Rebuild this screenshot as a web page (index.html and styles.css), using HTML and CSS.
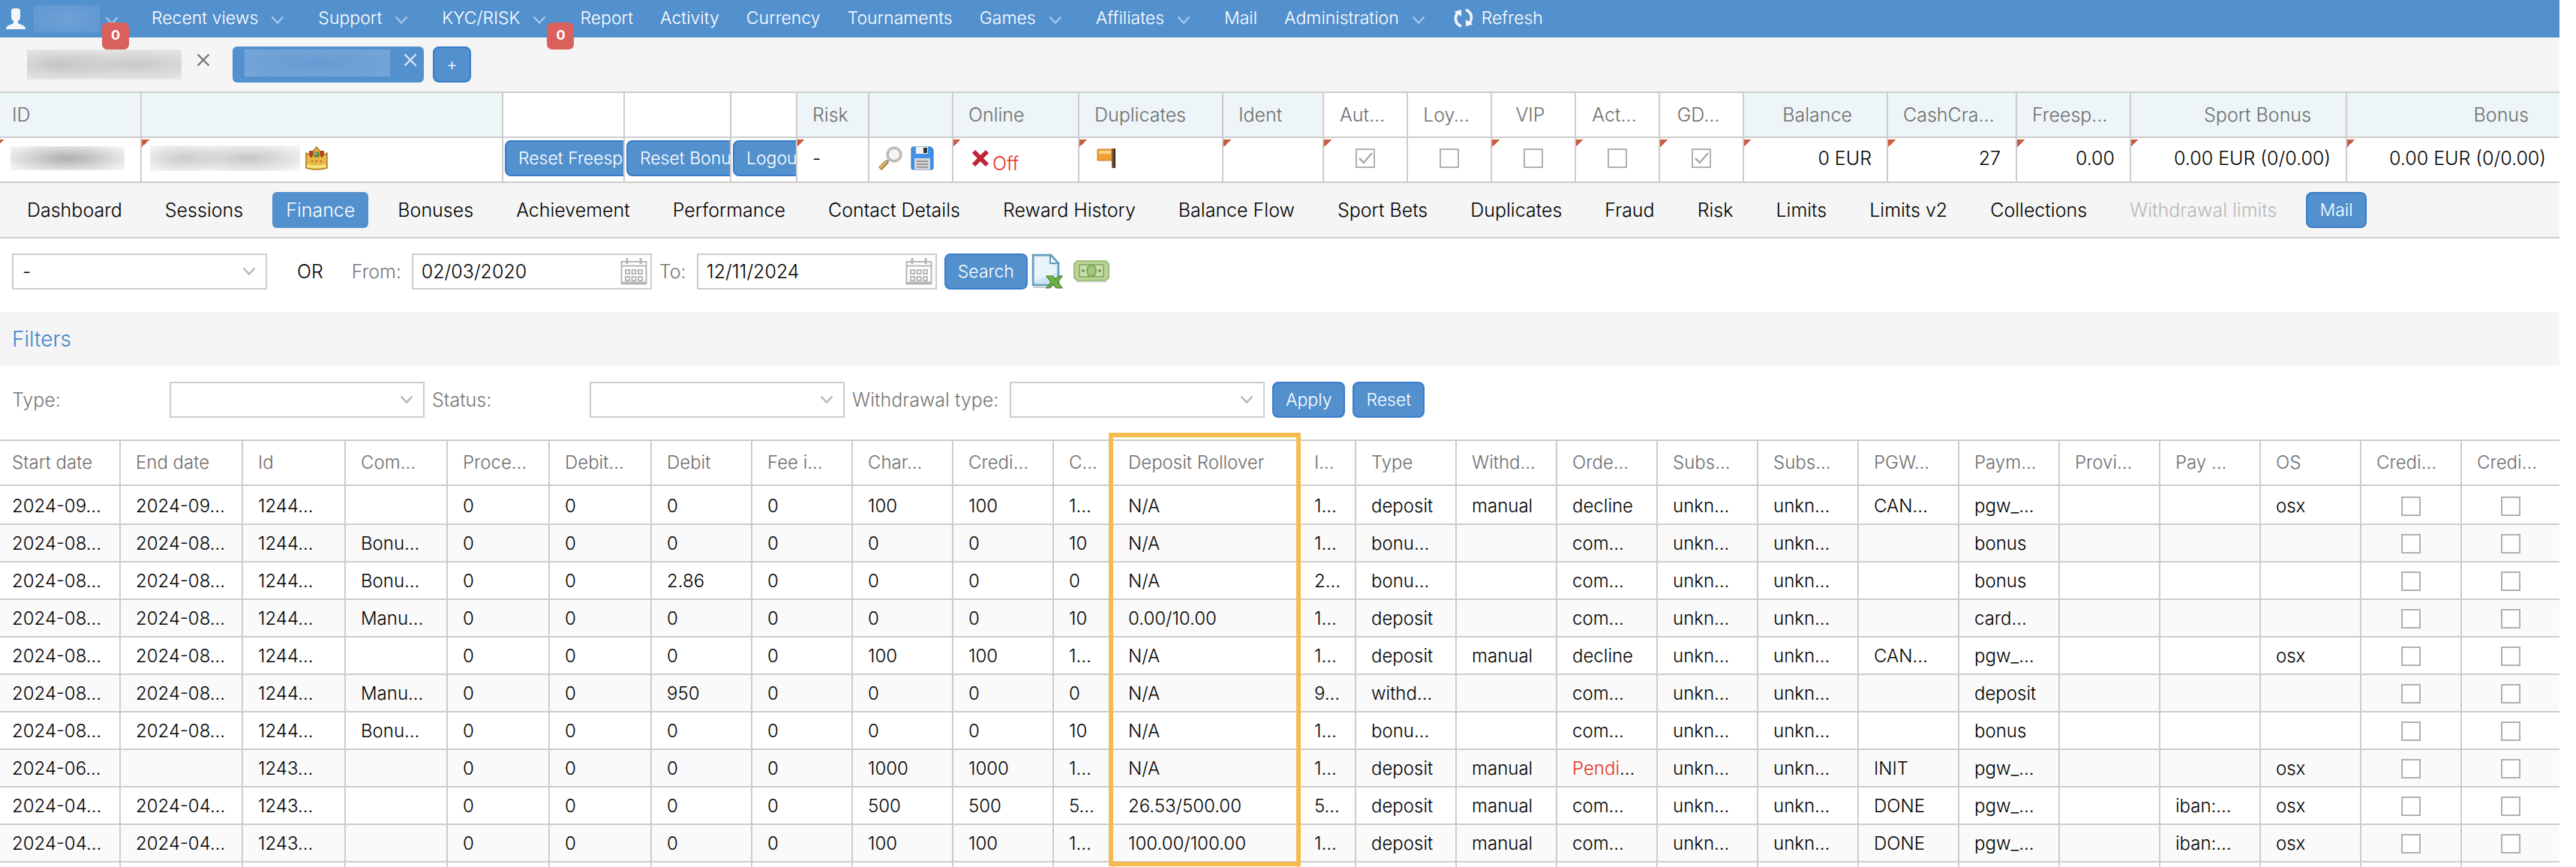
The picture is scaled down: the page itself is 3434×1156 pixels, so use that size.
FILE: index.html
```html
<!DOCTYPE html>
<html lang="en">
<head>
<meta charset="utf-8">
<title>Player finance</title>
<link rel="stylesheet" href="styles.css">
</head>
<body>
<svg class="sprite" aria-hidden="true">
  <symbol id="chev" viewBox="0 0 18 12"><path d="M1.500 1.500 9 9.500l7.500-8" fill="none" stroke="currentColor" stroke-width="2.500"/></symbol>
  <symbol id="close" viewBox="0 0 18 18"><path d="M1.500 1.500l15 15M16.500 1.500l-15 15" fill="none" stroke="currentColor" stroke-width="2.400"/></symbol>
  <symbol id="calendar" viewBox="0 0 36 38">
    <path d="M1.500 6h33v29h-33z" fill="#fff" stroke="#b5b5b5" stroke-width="2"/>
    <path d="M1 11.500h34" stroke="#b5b5b5" stroke-width="2"/><path d="M1 34.500h34" stroke="#b5b5b5" stroke-width="4"/>
    <path d="M9 1v8M27 1v8" stroke="#b5b5b5" stroke-width="3"/>
    <path d="M7 17h5v5H7zM15.500 17h5v5h-5zM24 17h5v5h-5zM7 26h5v5H7zM15.500 26h5v5h-5zM24 26h5v5h-5z" fill="none" stroke="#b5b5b5" stroke-width="2"/>
  </symbol>
</svg>

<nav class="topbar">
  <a class="top-item user" href="#" aria-label="Account">
    <svg width="26" height="28" viewBox="0 0 26 28"><path d="M7 3q0-3 6-3t6 3v8q0 4-3 6v3l7 3q3 1.500 3 5H0q0-3.500 3-5l7-3v-3q-3-2-3-6z" fill="#f4f6f8"/></svg>
    <span class="redact redact-user"></span>
    <svg class="chev" width="18" height="12"><use href="#chev"/></svg><b class="badge">0</b>
  </a>
  <a class="top-item menu" href="#">Recent views<svg class="chev" width="18" height="12"><use href="#chev"/></svg></a>
  <a class="top-item menu" href="#">Support<svg class="chev" width="18" height="12"><use href="#chev"/></svg></a>
  <a class="top-item menu" href="#">KYC/RISK<svg class="chev" width="18" height="12"><use href="#chev"/></svg><b class="badge">0</b></a>
  <a class="top-item" href="#">Report</a>
  <a class="top-item" href="#">Activity</a>
  <a class="top-item" href="#">Currency</a>
  <a class="top-item" href="#">Tournaments</a>
  <a class="top-item menu" href="#">Games<svg class="chev" width="18" height="12"><use href="#chev"/></svg></a>
  <a class="top-item menu" href="#">Affiliates<svg class="chev" width="18" height="12"><use href="#chev"/></svg></a>
  <a class="top-item" href="#">Mail</a>
  <a class="top-item menu" href="#">Administration<svg class="chev" width="18" height="12"><use href="#chev"/></svg></a>
  <a class="top-item refresh" href="#"><svg width="28" height="28" viewBox="0 0 28 28"><g fill="none" stroke="#f4f6f8" stroke-width="3.600"><path d="M11 25Q3 22 3.500 13.500 4 9 7 6"/><path d="M17 3q8 3 7.500 11.500-.5 4.500-3.500 7.500"/></g><path d="M1.500 5.500 11 3v9zM26.500 22.500 17 25v-9z" fill="#f4f6f8"/></svg>Refresh</a>
</nav>

<div class="tabs">
  <div class="tab"><span class="redact redact-tab"></span><button class="tab-close" aria-label="Close tab"><svg width="18" height="18"><use href="#close"/></svg></button></div>
  <div class="tab tab-on"><span class="redact redact-tab-on"></span><button class="tab-close" aria-label="Close tab"><svg width="18" height="18"><use href="#close"/></svg></button></div>
  <button class="btn tab-add">+</button>
</div>

<main class="page">
<table class="summary">
  <colgroup><col style="width:189px"><col style="width:482px"><col style="width:162px"><col style="width:142px"><col style="width:88px"><col style="width:96px"><col style="width:112px"><col style="width:168px"><col style="width:192px"><col style="width:134px"><col style="width:112px"><col style="width:112px"><col style="width:112px"><col style="width:112px"><col style="width:112px"><col style="width:192px"><col style="width:172px"><col style="width:152px"><col style="width:288px"><col style="width:283px"></colgroup>
  <thead><tr>
    <th class="tint">ID</th><th class="tint"></th><th></th><th></th><th></th><th class="tint">Risk</th><th class="tint"></th><th class="tint">Online</th><th class="tint">Duplicates</th><th class="tint">Ident</th><th class="mid">Aut…</th><th class="mid">Loy…</th><th class="mid">VIP</th><th class="mid">Act…</th><th class="mid">GD…</th><th class="tint num">Balance</th><th class="tint num wide">CashCra…</th><th class="tint num wide">Freesp…</th><th class="tint num">Sport Bonus</th><th class="tint num">Bonus</th>
  </tr></thead>
  <tbody><tr>
    <td class="note-left"><span class="redact redact-id"></span></td>
    <td class="note name"><div class="icons"><span class="redact redact-name"></span><svg width="32" height="32" viewBox="0 0 32 32"><path d="M2 9l5 3 4-5 5-6 5 6 4 5 5-3v20q-14 4-28 0z" fill="#e6bb45" stroke="#a87718" stroke-width="1.500"/><path d="M3 24q13 3 26 0v4q-13 3-26 0z" fill="#f7e27c"/><path d="M6 6h5l1 5-3 5-3-5zM26 6h-5l-1 5 3 5 3-5z" fill="#bb3a22"/><circle cx="16" cy="11" r="4" fill="#3f8a4e" stroke="#c9962a" stroke-width="1.500"/><circle cx="15" cy="10" r="1.500" fill="#a9d8a0"/><g fill="#c2602a"><circle cx="10" cy="20" r="1.300"/><circle cx="16" cy="20" r="1.300"/><circle cx="22" cy="20" r="1.300"/></g></svg></div></td>
    <td class="act"><button class="btn">Reset Freespins</button></td>
    <td class="act"><button class="btn">Reset Bonus</button></td>
    <td class="act"><button class="btn">Logout</button></td>
    <td class="note">-</td>
    <td class="tools"><div class="icons"><svg width="32" height="32" viewBox="0 0 32 32"><path d="M2 30 12 20" stroke="#a98245" stroke-width="6"/><path d="M2 29 11 20" stroke="#dcb267" stroke-width="3"/><path d="M11 21l4-4" stroke="#999" stroke-width="3"/><circle cx="21" cy="11" r="9" fill="#f4f4f4" stroke="#aaa" stroke-width="3.500"/><circle cx="21" cy="11" r="9.500" fill="none" stroke="#d6d6d6" stroke-width="1.200"/></svg><svg width="32" height="32" viewBox="0 0 32 32"><path d="M2 3q0-2 2-2h24l3 3v25q0 2-2 2H4q-2 0-2-2z" fill="#4192e6" stroke="#2b70c0"/><path d="M8 1h16v9H8z" fill="#f2f2f2"/><path d="M18 2h5v7h-5z" fill="#333"/><path d="M6 16h21v15H6z" fill="#d5d5d5"/><path d="M9 20h15M9 24h15M9 28h15" stroke="#9a9a9a" stroke-width="1.800"/></svg></div></td>
    <td class="note"><div class="icons off"><svg width="24" height="24" viewBox="0 0 24 24"><path d="M3 3l18 18M21 3 3 21" stroke="#bf2438" stroke-width="6"/></svg><span>Off</span></div></td>
    <td class="note"><svg class="flag" width="26" height="28" viewBox="0 0 26 28"><path d="M1 2h20v15H1z" fill="#f0a038" stroke="#c97a1e"/><path d="M3 4h16v4H3z" fill="#fbd48c"/><path d="M20 1h5v26h-5z" fill="#7a5232"/><path d="M23 1h2v26h-2z" fill="#3c2716"/></svg></td>
    <td class="note"></td>
    <td class="note mid"><input type="checkbox" aria-label="Auto" checked></td>
    <td class="mid"><input type="checkbox" aria-label="Loyalty"></td>
    <td class="note mid"><input type="checkbox" aria-label="VIP"></td>
    <td class="note mid"><input type="checkbox" aria-label="Active"></td>
    <td class="note mid"><input type="checkbox" aria-label="GDPR" checked></td>
    <td class="note num">0 EUR</td><td class="note num">27</td><td class="note num">0.00</td><td class="note num">0.00 EUR (0/0.00)</td><td class="note num">0.00 EUR (0/0.00)</td>
  </tr></tbody>
</table>

<nav class="sections">
  <a href="#">Dashboard</a><a href="#">Sessions</a><a class="on" href="#">Finance</a><a href="#">Bonuses</a><a href="#">Achievement</a><a href="#">Performance</a><a href="#">Contact Details</a><a href="#">Reward History</a><a href="#">Balance Flow</a><a href="#">Sport Bets</a><a href="#">Duplicates</a><a href="#">Fraud</a><a href="#">Risk</a><a href="#">Limits</a><a href="#">Limits v2</a><a href="#">Collections</a><a class="dim" href="#">Withdrawal limits</a><button class="btn">Mail</button>
</nav>

<form class="search">
  <select aria-label="Period"><option>-</option></select>
  <span class="or">OR</span>
  <label for="from">From:</label>
  <div class="date"><input id="from" type="text" value="02/03/2020"><svg width="36" height="38"><use href="#calendar"/></svg></div>
  <label for="to">To:</label>
  <div class="date"><input id="to" type="text" value="12/11/2024"><svg width="36" height="38"><use href="#calendar"/></svg></div>
  <button class="btn" type="button">Search</button>
  <button class="tool" type="button" aria-label="Export to spreadsheet"><svg width="46" height="48" viewBox="0 0 46 48"><path d="M4 2h24l10 11v29H4z" fill="#cfe4f1" stroke="#5f9dc0" stroke-width="2.500"/><path d="M7 5h20v9l8 2v10L7 36z" fill="#eaf5fb"/><path d="M27 2v11h11z" fill="#f8fcff" stroke="#5f9dc0" stroke-width="2"/><path d="M4 45h26" stroke="#b9b9b9" stroke-width="1.500"/><path d="M22 30h8l4 4 5-4h4l-6 8 6 8h-8l-4-5-5 5h-4l6-8z" fill="#6fb33f" stroke="#3f7f25" stroke-width="1.200"/></svg></button>
  <button class="tool money" type="button" aria-label="Payments"><svg width="48" height="32" viewBox="0 0 48 32"><path d="M5 2h38l4 4v18l-4 4H5l-4-4V6z" fill="#b9d595" stroke="#9dbd7b" stroke-width="2"/><path d="M8 7h32v16H8z" fill="#c9dfac" stroke="#8fb26d" stroke-width="2"/><ellipse cx="24" cy="15" rx="6" ry="7.500" fill="#a3c67d" stroke="#7fa55c" stroke-width="2"/><circle cx="13" cy="15" r="2" fill="#6f974c"/><circle cx="35" cy="15" r="2" fill="#6f974c"/><path d="M4 30h40" stroke="#d5d5d5" stroke-width="1.500"/></svg></button>
</form>

<h2 class="filters-title">Filters</h2>
<form class="filters">
  <label for="type">Type:</label><select id="type"><option></option></select>
  <label for="status">Status:</label><select id="status"><option></option></select>
  <label for="wtype">Withdrawal type:</label><select id="wtype"><option></option></select>
  <button class="btn" type="button">Apply</button><button class="btn" type="button">Reset</button>
</form>

<section class="grid-area">
<div class="grid-scroll">
<table class="grid">
  <colgroup><col style="width:161px"><col style="width:163px"><col style="width:137px"><col style="width:136px"><col style="width:136px"><col style="width:136px"><col style="width:134px"><col style="width:134px"><col style="width:134px"><col style="width:134px"><col style="width:79px"><col style="width:248px"><col style="width:76px"><col style="width:134px"><col style="width:134px"><col style="width:134px"><col style="width:134px"><col style="width:134px"><col style="width:134px"><col style="width:134px"><col style="width:134px"><col style="width:134px"><col style="width:134px"><col style="width:134px"><col style="width:130px"></colgroup>
  <thead><tr><th>Start date</th><th>End date</th><th>Id</th><th>Com…</th><th>Proce…</th><th>Debit…</th><th>Debit</th><th>Fee i…</th><th>Char…</th><th>Credi…</th><th>C…</th><th>Deposit Rollover</th><th>I…</th><th>Type</th><th>Withd…</th><th>Orde…</th><th>Subs…</th><th>Subs…</th><th>PGW…</th><th>Paym…</th><th>Provi…</th><th>Pay …</th><th>OS</th><th>Credi…</th><th>Credi…</th></tr></thead>
  <tbody>
  <tr><td>2024-09…</td><td>2024-09…</td><td>1244…</td><td></td><td>0</td><td>0</td><td>0</td><td>0</td><td>100</td><td>100</td><td>1…</td><td>N/A</td><td>1…</td><td>deposit</td><td>manual</td><td>decline</td><td>unkn…</td><td>unkn…</td><td>CAN…</td><td>pgw_…</td><td></td><td></td><td>osx</td><td><input type="checkbox" aria-label="Credit flag 1"></td><td><input type="checkbox" aria-label="Credit flag 2"></td></tr>
  <tr><td>2024-08…</td><td>2024-08…</td><td>1244…</td><td>Bonu…</td><td>0</td><td>0</td><td>0</td><td>0</td><td>0</td><td>0</td><td>10</td><td>N/A</td><td>1…</td><td>bonu…</td><td></td><td>com…</td><td>unkn…</td><td>unkn…</td><td></td><td>bonus</td><td></td><td></td><td></td><td><input type="checkbox" aria-label="Credit flag 1"></td><td><input type="checkbox" aria-label="Credit flag 2"></td></tr>
  <tr><td>2024-08…</td><td>2024-08…</td><td>1244…</td><td>Bonu…</td><td>0</td><td>0</td><td>2.86</td><td>0</td><td>0</td><td>0</td><td>0</td><td>N/A</td><td>2…</td><td>bonu…</td><td></td><td>com…</td><td>unkn…</td><td>unkn…</td><td></td><td>bonus</td><td></td><td></td><td></td><td><input type="checkbox" aria-label="Credit flag 1"></td><td><input type="checkbox" aria-label="Credit flag 2"></td></tr>
  <tr><td>2024-08…</td><td>2024-08…</td><td>1244…</td><td>Manu…</td><td>0</td><td>0</td><td>0</td><td>0</td><td>0</td><td>0</td><td>10</td><td>0.00/10.00</td><td>1…</td><td>deposit</td><td></td><td>com…</td><td>unkn…</td><td>unkn…</td><td></td><td>card…</td><td></td><td></td><td></td><td><input type="checkbox" aria-label="Credit flag 1"></td><td><input type="checkbox" aria-label="Credit flag 2"></td></tr>
  <tr><td>2024-08…</td><td>2024-08…</td><td>1244…</td><td></td><td>0</td><td>0</td><td>0</td><td>0</td><td>100</td><td>100</td><td>1…</td><td>N/A</td><td>1…</td><td>deposit</td><td>manual</td><td>decline</td><td>unkn…</td><td>unkn…</td><td>CAN…</td><td>pgw_…</td><td></td><td></td><td>osx</td><td><input type="checkbox" aria-label="Credit flag 1"></td><td><input type="checkbox" aria-label="Credit flag 2"></td></tr>
  <tr><td>2024-08…</td><td>2024-08…</td><td>1244…</td><td>Manu…</td><td>0</td><td>0</td><td>950</td><td>0</td><td>0</td><td>0</td><td>0</td><td>N/A</td><td>9…</td><td>withd…</td><td></td><td>com…</td><td>unkn…</td><td>unkn…</td><td></td><td>deposit</td><td></td><td></td><td></td><td><input type="checkbox" aria-label="Credit flag 1"></td><td><input type="checkbox" aria-label="Credit flag 2"></td></tr>
  <tr><td>2024-08…</td><td>2024-08…</td><td>1244…</td><td>Bonu…</td><td>0</td><td>0</td><td>0</td><td>0</td><td>0</td><td>0</td><td>10</td><td>N/A</td><td>1…</td><td>bonu…</td><td></td><td>com…</td><td>unkn…</td><td>unkn…</td><td></td><td>bonus</td><td></td><td></td><td></td><td><input type="checkbox" aria-label="Credit flag 1"></td><td><input type="checkbox" aria-label="Credit flag 2"></td></tr>
  <tr><td>2024-06…</td><td></td><td>1243…</td><td></td><td>0</td><td>0</td><td>0</td><td>0</td><td>1000</td><td>1000</td><td>1…</td><td>N/A</td><td>1…</td><td>deposit</td><td>manual</td><td><span class="alert">Pendi</span>…</td><td>unkn…</td><td>unkn…</td><td>INIT</td><td>pgw_…</td><td></td><td></td><td>osx</td><td><input type="checkbox" aria-label="Credit flag 1"></td><td><input type="checkbox" aria-label="Credit flag 2"></td></tr>
  <tr><td>2024-04…</td><td>2024-04…</td><td>1243…</td><td></td><td>0</td><td>0</td><td>0</td><td>0</td><td>500</td><td>500</td><td>5…</td><td>26.53/500.00</td><td>5…</td><td>deposit</td><td>manual</td><td>com…</td><td>unkn…</td><td>unkn…</td><td>DONE</td><td>pgw_…</td><td></td><td>iban:…</td><td>osx</td><td><input type="checkbox" aria-label="Credit flag 1"></td><td><input type="checkbox" aria-label="Credit flag 2"></td></tr>
  <tr><td>2024-04…</td><td>2024-04…</td><td>1243…</td><td></td><td>0</td><td>0</td><td>0</td><td>0</td><td>100</td><td>100</td><td>1…</td><td>100.00/100.00</td><td>1…</td><td>deposit</td><td>manual</td><td>com…</td><td>unkn…</td><td>unkn…</td><td>DONE</td><td>pgw_…</td><td></td><td>iban:…</td><td>osx</td><td><input type="checkbox" aria-label="Credit flag 1"></td><td><input type="checkbox" aria-label="Credit flag 2"></td></tr>
  <tr><td></td><td></td><td></td><td></td><td></td><td></td><td></td><td></td><td></td><td></td><td></td><td></td><td></td><td></td><td></td><td></td><td></td><td></td><td></td><td></td><td></td><td></td><td></td><td></td><td></td></tr>
  </tbody>
</table>
</div>
<div class="highlight"></div>
</section>
</main>
</body>
</html>
```
FILE: styles.css
```css
* { box-sizing: border-box; }
body {
  margin: 0;
  padding-right: 22px;
  height: 100vh;
  overflow: hidden;
  display: flex;
  flex-direction: column;
  background: #fff;
  color: #000;
  font: 300 25px/32px Inter, "Liberation Sans", sans-serif;
}
svg { display: block; flex: none; }
a { color: inherit; text-decoration: none; }
button, input, select { font: inherit; color: inherit; margin: 0; }
.sprite { position: absolute; width: 0; height: 0; }

.btn {
  flex: none;
  height: 48px;
  padding: 0 16px;
  border: 2px solid #3a7bc8;
  border-radius: 8px;
  background: #5290ce;
  color: #fff;
  font-size: 23px;
  line-height: 28px;
  white-space: nowrap;
}

/* Masked private values */
.redact { display: block; flex: none; }
.redact-user { width: 88px; height: 36px; margin: 0 7px 0 11px; background: radial-gradient(#6fa1d6, #5e97d1); }
.redact-tab { width: 206px; height: 40px; background: radial-gradient(ellipse 40% 60% at 20% 50%, #c4c4c4, transparent), radial-gradient(ellipse 60% 60% at 70% 50%, #c8c8c8, #e8e8e8); }
.redact-tab-on { width: 194px; height: 36px; background: radial-gradient(#669bd3, #77a6d8); }
.redact-id { width: 152px; height: 32px; background: radial-gradient(ellipse 60% 65%, #b4b4b4 10%, #f2f2f2); }
.redact-name { width: 200px; height: 34px; background: radial-gradient(ellipse 30% 60% at 22% 50%, #cacaca, transparent), radial-gradient(ellipse 45% 60% at 65% 50%, #c6c6c6, #f3f3f3); }

/* Top menu */
.topbar {
  display: flex;
  flex: none;
  height: 50px;
  padding-left: 8px;
  background: #5290ce;
  color: #fff;
  font-size: 23px;
}
.top-item { position: relative; display: flex; align-items: center; padding: 0 18px 2px; white-space: nowrap; }
.menu { padding-right: 27px; }
.chev { margin: 6px 0 0 17px; color: #a9c7e8; }
.user { padding: 0 26px 0 0; }
.user .chev { margin-left: 0; }
.refresh { gap: 10px; padding-left: 10px; }
.badge {
  position: absolute;
  right: -10px;
  top: 30px;
  z-index: 1;
  width: 36px;
  height: 36px;
  border-radius: 7px;
  background: #d9605c;
  font-size: 18px;
  font-weight: 700;
  line-height: 34px;
  text-align: center;
}
.user .badge { right: 12px; }

/* Open player tabs */
.tabs { display: flex; flex: none; align-items: center; height: 72px; padding-left: 16px; background: #f5f5f5; }
.tab { display: flex; align-items: center; height: 48px; margin-right: 12px; padding: 0 10px 0 20px; border-radius: 6px; color: #777; }
.tab-close { margin: 0 0 12px 20px; padding: 0; border: 0; background: none; }
.tab:first-child { margin-right: 20px; }
.tab-on { padding: 0 9px 4px 16px; background: #5290ce; color: #dbe8f5; }
.tab-on .tab-close { margin: 0 0 8px 18px; }

/* Tables share one ruled look */
table { width: 100%; table-layout: fixed; border-collapse: separate; border-spacing: 0; border-top: 2px solid #ccc; }
th, td { padding: 0 0 0 20px; border: 0 solid #ccc; border-width: 0 2px 2px 0; text-align: left; white-space: nowrap; overflow: hidden; font-weight: 300; }
th:first-child, td:first-child { padding-left: 16px; }
th:last-child, td:last-child { border-right: 0; }
th { color: #6e6e6e; }
td .icons { display: flex; align-items: center; }

.page { display: flex; flex: 1; flex-direction: column; min-height: 0; }
.summary { flex: none; }
.summary th, .summary td { height: 60px; }
.summary td { padding-bottom: 4px; background-repeat: no-repeat; background-position: 0 2px; background-size: 10px 10px; }
.summary .note { background-image: linear-gradient(135deg, #cb5a42 50%, transparent 50%); }
.summary .note-left { padding-left: 14px; background-image: linear-gradient(135deg, #cb5a42 50%, transparent 50%); background-position: -4px 2px; }
.summary .name { padding-left: 11px; }
.name .icons { gap: 6px; }
.summary .tint { background: #edf5f8; }
.summary .num { padding-right: 20px; text-align: right; }
.summary th.num { padding-right: 46px; }
.summary th.wide { padding: 0 0 0 20px; text-align: left; }
.summary .num:last-child { padding-right: 18px; }
.summary th.num:last-child { padding-right: 41px; }
.summary td.mid { padding-left: 0; text-align: center; }
.summary th.mid { padding: 0 26px 0 18px; text-align: center; }
.summary .act { padding-left: 2px; }
.act .btn { display: block; }
.summary .tools { padding-left: 12px; }
.tools .icons { gap: 10px; }
.off { gap: 4px; padding-left: 4px; color: #e8301e; }
.off span { padding-top: 14px; line-height: 24px; }
.flag { margin-left: 3px; }

input[type="checkbox"] {
  appearance: none;
  display: block;
  width: 26px;
  height: 26px;
  margin: 0 auto;
  border: 2px solid #b0b0b0;
  background: #fff;
}
input[type="checkbox"]:checked { background: url("data:image/svg+xml,%3Csvg xmlns='http://www.w3.org/2000/svg' viewBox='0 0 22 22'%3E%3Cpath d='M3 11l6 6L20 4' fill='none' stroke='%23aaa' stroke-width='2.5'/%3E%3C/svg%3E"); }

/* Player sections */
.sections { display: flex; flex: none; align-items: center; gap: 21px; height: 74px; padding: 0 18px; border-bottom: 2px solid #ccc; background: #f5f5f5; white-space: nowrap; }
.sections a { padding: 8px 18px; border-radius: 6px; }
.sections .on { background: #5290ce; color: #fff; }
.sections .dim { color: #b8b8b8; }

/* Search and filter forms */
label { color: #777; white-space: nowrap; }
select, .date {
  width: 340px;
  height: 48px;
  border: 2px solid #ccc;
  border-radius: 0;
  background: #fff;
}
select {
  appearance: none;
  padding: 0 12px;
  background: url("data:image/svg+xml,%3Csvg xmlns='http://www.w3.org/2000/svg' viewBox='0 0 18 12'%3E%3Cpath d='M1.5 1.5 9 9.500l7.500-8' fill='none' stroke='%23b5b5b5' stroke-width='2.500'/%3E%3C/svg%3E") no-repeat right 13px center / 18px 12px #fff;
}
.search { display: flex; flex: none; align-items: center; height: 98px; padding: 0 16px 10px; }
.or { margin: 0 38px 0 40px; }
.search label { width: 80px; }
.date { display: flex; align-items: center; width: 320px; padding-right: 4px; margin-right: 10px; }
.date input { flex: 1; min-width: 0; padding: 0 0 0 11px; border: 0; background: none; }
.search .date + label { width: 50px; }
.tool { display: block; padding: 0; border: 0; background: none; margin-left: 3px; }
.money { margin-left: 12px; }

.filters-title { flex: none; margin: 0; padding: 0 16px; background: #f5f5f5; color: #4285cd; font-size: 28px; font-weight: 300; line-height: 72px; }
.filters { display: flex; flex: none; align-items: center; gap: 10px; height: 98px; padding: 2px 16px 10px; }
.filters label { width: 200px; }

/* Transactions */
.grid-area { position: relative; flex: 1; min-height: 0; }
.grid-scroll { height: 100%; overflow: hidden; }
.grid { font-size: 24px; }
.grid th { height: 60px; }
.grid td { height: 50px; padding-top: 2px; }
.grid tbody tr:first-child td { height: 52px; padding-top: 4px; }
.grid tbody tr:nth-child(even) { background: #fafafa; }
.grid td:nth-last-child(-n+2) { padding-left: 0; }
.alert { color: #e8301e; }
.highlight {
  position: absolute;
  top: -9px;
  bottom: 1px;
  left: calc(100% * 1478 / 3412);
  width: calc(100% * 256 / 3412);
  border: 6px solid #f4bb4f;
  pointer-events: none;
}
```
